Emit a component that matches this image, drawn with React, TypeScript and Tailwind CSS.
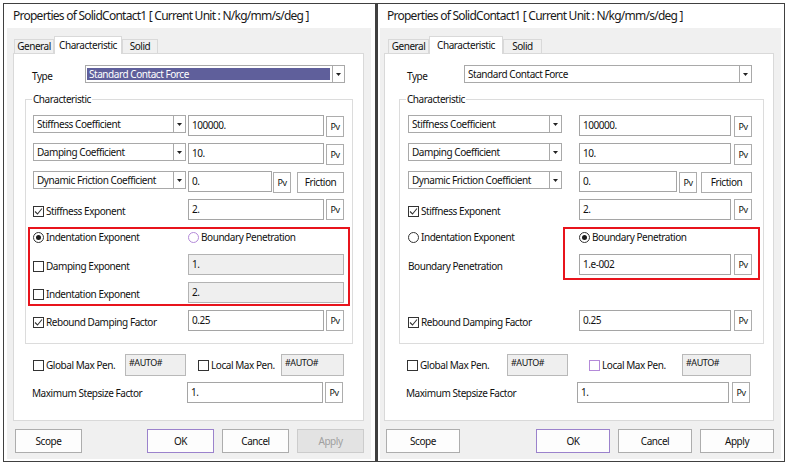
import type { ReactNode } from 'react'

type Variant = 'narrow' | 'wide'

// per-dialog geometry; the two property windows were captured at different widths
const SZ = {
  narrow: {
    dialog: 'w-[373px] border',
    body: 'ml-[3px] mr-[4px]',
    tabStrip: 'pl-[7px]',
    tabs: ['w-[40px]', 'w-[68px]', 'w-[36px]'],
    panel: 'ml-[6px] w-[351px]',
    typeRow: 'pl-[18px]',
    typeLabel: 'w-[53px]',
    typeSelect: 'w-[260px]',
    group: 'ml-[11px] w-[328px]',
    row: 'pl-[5px]',
    lead: 'w-[155px]',
    combo: 'w-[153px]',
    input: 'w-[136px]',
    pvGap: 'ml-[2px]',
    dynInput: 'w-[84px]',
    dynPvGap: 'ml-[1px]',
    fric: 'ml-[6px] w-[47px]',
    bottom: 'pl-[19px]',
    globalCol: 'w-[92px]',
    auto1: 'w-[61px]',
    localCol: 'ml-[12px] w-[83px]',
    auto2: 'w-[63px]',
    buttons: 'ml-[6px] w-[351px] pl-[2px]',
    btn: 'w-[67px]',
    btnGap: 'gap-[8px]',
  },
  wide: {
    dialog: 'w-[409px] border border-l-2',
    body: 'ml-[2px] mr-[3px]',
    tabStrip: 'pl-[8px]',
    tabs: ['w-[41px]', 'w-[74px]', 'w-[39px]'],
    panel: 'ml-[4px] w-[390px]',
    typeRow: 'pl-[22px]',
    typeLabel: 'w-[57px]',
    typeSelect: 'w-[288px]',
    group: 'ml-[14px] w-[365px]',
    row: 'pl-[6px]',
    lead: 'w-[171px]',
    combo: 'w-[154px]',
    input: 'w-[152px]',
    pvGap: 'ml-[3px]',
    dynInput: 'w-[98px]',
    dynPvGap: 'ml-[2px]',
    fric: 'ml-[4px] w-[51px]',
    bottom: 'pl-[22px]',
    globalCol: 'w-[100px]',
    auto1: 'w-[61px]',
    localCol: 'ml-[21px] w-[93px]',
    auto2: 'w-[69px]',
    buttons: 'ml-[4px] w-[390px] pl-[2px]',
    btn: 'w-[74px]',
    btnGap: 'gap-[8px]',
  },
}

function Arrow() {
  return (
    <svg width="5" height="3" viewBox="0 0 5 3">
      <polygon points="0,0 5,0 2.5,3" fill="#222" />
    </svg>
  )
}

function Combo({ w, text, highlight }: { w: string; text: string; highlight?: boolean }) {
  return (
    <div className={`${w} shrink-0 h-[18px] border border-[#a9a9a9] bg-white flex`}>
      <div className="flex-1 flex py-[2px] pl-px min-w-0">
        <div
          className={`flex-1 flex items-center pl-[2px] leading-[12px] whitespace-nowrap ${
            highlight ? 'bg-[#5f5f9b] text-white' : ''
          }`}
        >
          {text}
        </div>
      </div>
      <div className="w-[12px] shrink-0 ml-[2px] border-l border-[#a9a9a9] flex items-center justify-center">
        <Arrow />
      </div>
    </div>
  )
}

function Field({ w, value, disabled }: { w: string; value: string; disabled?: boolean }) {
  return (
    <div
      className={`${w} shrink-0 h-[21px] border px-[3px] pt-[2px] leading-[14px] whitespace-nowrap ${
        disabled ? 'bg-[#efefef] border-[#b3b3b3]' : 'bg-white border-[#a5a5a5]'
      }`}
    >
      {value}
    </div>
  )
}

function Pv({ className }: { className: string }) {
  return (
    <div
      className={`${className} shrink-0 w-[18px] h-[21px] border border-[#adadad] bg-white flex items-center justify-center text-[9px]`}
    >
      Pv
    </div>
  )
}

function Check({ checked, purple, children }: { checked?: boolean; purple?: boolean; children: ReactNode }) {
  return (
    <span className="flex items-center gap-[2px] whitespace-nowrap">
      <span
        className={`w-[11px] h-[11px] shrink-0 border bg-white flex items-center justify-center ${
          purple ? 'border-[#b48ad9]' : 'border-[#333]'
        }`}
      >
        {checked && (
          <svg width="9" height="9" viewBox="0 0 9 9">
            <path d="M1 4.5 L3.5 7 L8 1.5" fill="none" stroke="#333" strokeWidth="1.1" />
          </svg>
        )}
      </span>
      <span>{children}</span>
    </span>
  )
}

function Radio({ checked, purple, children }: { checked?: boolean; purple?: boolean; children: ReactNode }) {
  return (
    <span className="flex items-center gap-[2px] whitespace-nowrap">
      <span
        className={`w-[11px] h-[11px] shrink-0 rounded-full border bg-white flex items-center justify-center ${
          purple ? 'border-[#b48ad9]' : 'border-[#333]'
        }`}
      >
        {checked && <span className="w-[5px] h-[5px] rounded-full bg-[#1a1a1a]" />}
      </span>
      <span>{children}</span>
    </span>
  )
}

function Tab({ w, active, children }: { w: string; active?: boolean; children: ReactNode }) {
  return active ? (
    <div className={`${w} h-[18px] -mb-px relative z-10 bg-white border border-b-0 border-[#d9d9d9] flex justify-center pt-px leading-[15px]`}>
      {children}
    </div>
  ) : (
    <div className={`${w} h-[14px] bg-[#f0f0f0] border border-b-0 border-[#d9d9d9] flex items-center justify-center`}>
      {children}
    </div>
  )
}

function Button({ w, children, focus, disabled }: { w: string; children: ReactNode; focus?: boolean; disabled?: boolean }) {
  let look = 'bg-[#fdfdfd] border-[#adadad]'
  if (focus) look = 'bg-[#fdfdfd] border-[#9b82cc]'
  if (disabled) look = 'bg-[#e3e3e3] border-[#cccccc] text-[#a0a0a0]'
  return <div className={`${w} h-[24px] border ${look} flex items-center justify-center`}>{children}</div>
}

function Dialog({ v }: { v: Variant }) {
  const s = SZ[v]
  const wide = v === 'wide'

  return (
    <div className={`${s.dialog} h-[459px] border-[#404040] bg-white flex flex-col`}>
      <div className="h-[24px] pl-[9px] flex items-center text-[12px] tracking-[-0.75px] text-[#1a1a1a] whitespace-nowrap">
        Properties of SolidContact1 [ Current Unit : N/kg/mm/s/deg ]
      </div>

      <div className={`${s.body} flex-1 mb-[2px] bg-[#f0f0f0] pt-[8px] flex flex-col`}>
        {/* tab headers */}
        <div className={`${s.tabStrip} flex items-end h-[17px]`}>
          <Tab w={s.tabs[0]}>General</Tab>
          <Tab w={s.tabs[1]} active>
            Characteristic
          </Tab>
          <Tab w={s.tabs[2]}>Solid</Tab>
        </div>

        {/* Characteristic page */}
        <div className={`${s.panel} h-[368px] border border-[#d9d9d9] bg-white flex flex-col`}>
          <div className={`${s.typeRow} pt-[11px] flex h-[29px]`}>
            <span className={`${s.typeLabel} shrink-0 pt-[4px] leading-[14px]`}>Type</span>
            <Combo w={s.typeSelect} text="Standard Contact Force" highlight={!wide} />
          </div>

          <div className={`${s.group} relative mt-[16px] border border-[#dcdcdc] px-[2px] pt-[15px] pb-[12px]`}>
            <span className="absolute -top-[9px] left-[6px] bg-white px-px leading-[16px]">Characteristic</span>

            <div className={`${s.row} flex flex-col gap-[7px]`}>
              <div className="flex h-[21px]">
                <div className={`${s.lead} shrink-0`}>
                  <Combo w={s.combo} text="Stiffness Coefficient" />
                </div>
                <Field w={s.input} value="100000." />
                <Pv className={`${s.pvGap} mt-px`} />
              </div>
              <div className="flex h-[21px]">
                <div className={`${s.lead} shrink-0`}>
                  <Combo w={s.combo} text="Damping Coefficient" />
                </div>
                <Field w={s.input} value="10." />
                <Pv className={`${s.pvGap} mt-px`} />
              </div>
              <div className="flex h-[21px]">
                <div className={`${s.lead} shrink-0`}>
                  <Combo w={s.combo} text="Dynamic Friction Coefficient" />
                </div>
                <Field w={s.dynInput} value="0." />
                <Pv className={`${s.dynPvGap} mt-px`} />
                <div className={`${s.fric} shrink-0 h-[21px] mt-px border border-[#adadad] bg-white flex items-center justify-center`}>
                  Friction
                </div>
              </div>
              <div className="flex h-[21px] items-center">
                <div className={`${s.lead} shrink-0 pt-[3px]`}>
                  <Check checked>Stiffness Exponent</Check>
                </div>
                <Field w={s.input} value="2." />
                <Pv className={s.pvGap} />
              </div>
            </div>

            {/* exponent / penetration options */}
            {wide ? (
              <div className={`${s.row} mt-[7px] flex h-[79px] items-start`}>
                <div className="w-[155px] shrink-0 pt-[2px]">
                  <div className="h-[17px] flex items-center">
                    <Radio>Indentation Exponent</Radio>
                  </div>
                  <div className="mt-[8px] h-[21px] flex items-center pt-[3px]">Boundary Penetration</div>
                </div>
                <div className="w-[197px] shrink-0 border-2 border-[#e8141c] pl-[14px] pr-[6px] pb-[3px]">
                  <div className="h-[17px] flex items-center">
                    <Radio checked>Boundary Penetration</Radio>
                  </div>
                  <div className="mt-[8px] flex">
                    <Field w={s.input} value="1.e-002" />
                    <Pv className={s.pvGap} />
                  </div>
                </div>
              </div>
            ) : (
              <div className="mt-[7px] h-[79px] border-2 border-[#e8141c] px-[3px]">
                <div className="h-[17px] flex items-center">
                  <div className="w-[155px] shrink-0">
                    <Radio checked>Indentation Exponent</Radio>
                  </div>
                  <Radio purple>Boundary Penetration</Radio>
                </div>
                <div className="mt-[8px] h-[21px] flex items-center">
                  <div className="w-[155px] shrink-0 pt-[3px]">
                    <Check>Damping Exponent</Check>
                  </div>
                  <Field w="w-[156px]" value="1." disabled />
                </div>
                <div className="mt-[7px] h-[21px] flex items-center">
                  <div className="w-[155px] shrink-0 pt-[3px]">
                    <Check>Indentation Exponent</Check>
                  </div>
                  <Field w="w-[156px]" value="2." disabled />
                </div>
              </div>
            )}

            <div className={`${s.row} mt-[4px] flex h-[21px] items-center`}>
              <div className={`${s.lead} shrink-0 pt-[3px]`}>
                <Check checked>Rebound Damping Factor</Check>
              </div>
              <Field w={s.input} value="0.25" />
              <Pv className={s.pvGap} />
            </div>
          </div>

          <div className={`${s.bottom} mt-[10px] flex h-[22px] items-center`}>
            <div className={`${s.globalCol} shrink-0 pt-px`}>
              <Check>Global Max Pen.</Check>
            </div>
            <div className={`${s.auto1} shrink-0 h-[22px] border border-[#b9b9b9] bg-[#efefef] pl-[3px] pt-px leading-[14px] text-[9px]`}>
              #AUTO#
            </div>
            <div className={`${s.localCol} shrink-0 pt-px`}>
              <Check purple={wide}>Local Max Pen.</Check>
            </div>
            <div className={`${s.auto2} shrink-0 h-[22px] border border-[#b9b9b9] bg-[#efefef] pl-[3px] pt-px leading-[14px] text-[9px]`}>
              #AUTO#
            </div>
          </div>

          <div className={`${s.bottom} mt-[6px] flex h-[21px] items-center`}>
            <div className={`${s.lead} shrink-0 -ml-px pt-[2px]`}>Maximum Stepsize Factor</div>
            <Field w={s.input} value="1." />
            <Pv className={s.pvGap} />
          </div>
        </div>

        {/* dialog buttons */}
        <div className={`${s.buttons} mt-[8px] flex justify-between`}>
          <Button w={s.btn}>Scope</Button>
          <div className={`flex ${s.btnGap}`}>
            <Button w={s.btn} focus>
              OK
            </Button>
            <Button w={s.btn}>Cancel</Button>
            <Button w={s.btn} disabled={!wide}>
              Apply
            </Button>
          </div>
        </div>
      </div>
    </div>
  )
}

export default function App() {
  return (
    <div className="w-[790px] h-[464px] bg-white flex pt-[3px] pl-[3px] font-['Noto_Sans',sans-serif] text-[10px] tracking-[-0.45px] text-[#111]">
      <Dialog v="narrow" />
      <Dialog v="wide" />
    </div>
  )
}
